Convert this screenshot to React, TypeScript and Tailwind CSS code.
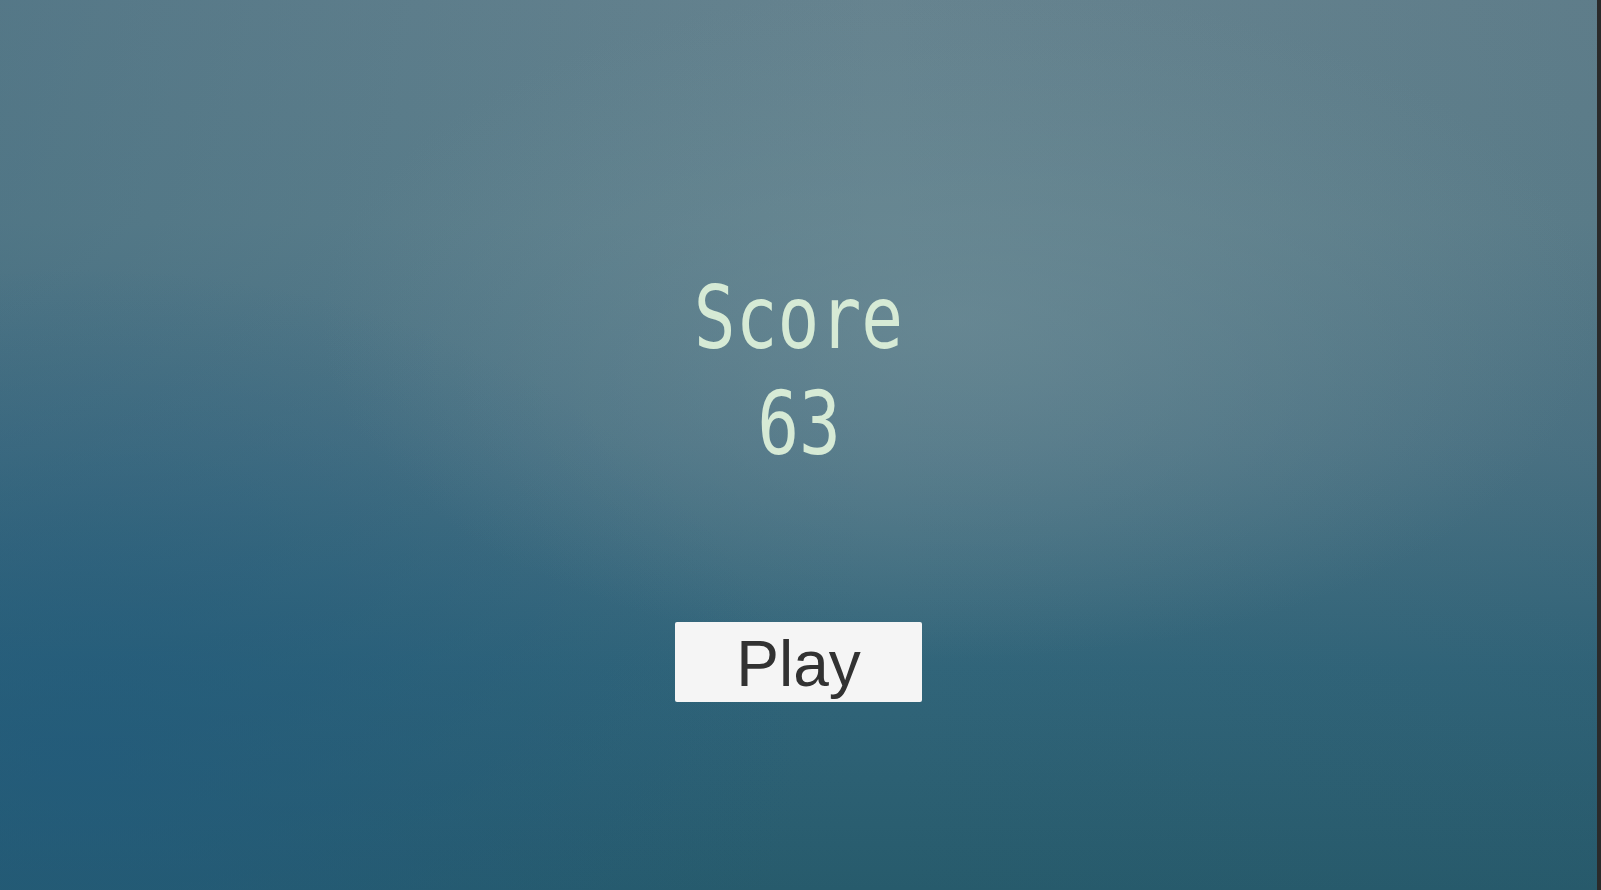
export default function App() {
  return (
    <div className="flex h-[890px] w-full overflow-hidden">
      <main className="relative flex flex-1 flex-col items-center bg-[radial-gradient(ellipse_40%_38%_at_60%_36%,rgba(112,142,152,0.6),transparent),radial-gradient(ellipse_45%_55%_at_5%_85%,rgba(32,90,124,0.7),transparent),linear-gradient(to_right,rgba(40,90,115,0.28)_0%,rgba(40,90,115,0.1)_35%,transparent_55%,rgba(40,80,100,0.12)_100%),linear-gradient(to_bottom,#66838f_0%,#60818d_25%,#4e7586_50%,#31657a_75%,#275b6c_100%)]">
        <div className="mt-[265px] flex flex-col items-center font-['DejaVu_Sans_Mono',monospace] text-[88px] leading-[106px] text-[#d6ead5]">
          <span className="scale-x-[0.79]">Score</span>
          <span className="scale-x-[0.79]">63</span>
        </div>
        <button
          type="button"
          className="mt-[145px] flex h-[80px] w-[247px] items-center justify-center rounded-[2px] bg-[#f5f5f5] pt-[4px] font-['Liberation_Sans',Arial,sans-serif] text-[64px] text-[#323232]"
        >
          Play
        </button>
      </main>
      <div className="w-[4px] bg-[#2a2a2a]" />
    </div>
  );
}
